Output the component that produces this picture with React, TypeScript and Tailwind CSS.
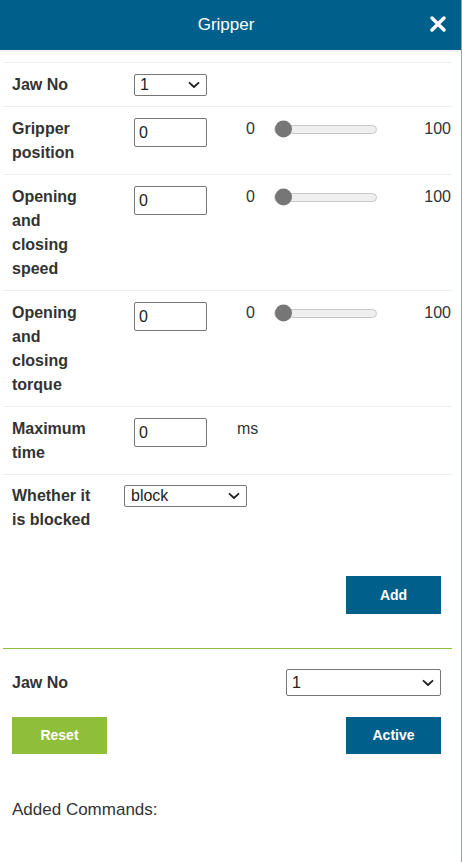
import React from "react";

const font = { fontFamily: '"Liberation Sans", Arial, sans-serif' };

function Chevron() {
  return (
    <svg width="12" height="8" viewBox="0 0 12 8" className="absolute right-[6px] top-1/2 -translate-y-1/2">
      <path d="M1.5 1.8 L6 6 L10.5 1.8" fill="none" stroke="#222" strokeWidth="1.8" strokeLinecap="round" strokeLinejoin="round" />
    </svg>
  );
}

function Select({ value, cls }: { value: string; cls: string }) {
  return (
    <div className={`relative border border-[#767676] rounded-[2px] bg-white text-[16px] text-[#222] leading-none flex items-center pl-[5px] shrink-0 ${cls}`}>
      {value}
      <Chevron />
    </div>
  );
}

function NumInput() {
  return (
    <div className="w-[73px] h-[29px] mt-[1px] border border-[#767676] rounded-[2px] bg-white text-[16px] text-[#222] flex items-center pl-[4px] shrink-0">
      0
    </div>
  );
}

function Slider() {
  return (
    <div className="flex items-center h-[24px] flex-1">
      <span className="text-[16px] text-[#333] w-[28px]">0</span>
      <div className="relative w-[103px] h-[9px] rounded-full bg-[#efefef] border border-[#c8c8c8]">
        <div className="absolute left-0 top-1/2 -translate-y-1/2 w-[17px] h-[17px] rounded-full bg-[#767676]" />
      </div>
      <div className="flex-1" />
      <span className="text-[16px] text-[#333]">100</span>
    </div>
  );
}

function Row({ label, children }: { label: React.ReactNode; children: React.ReactNode }) {
  return (
    <div className="flex items-start border-t border-[#eeeeee] pl-[9px] pr-[1px] pt-[10px] pb-[9px]">
      <div className="w-[122px] shrink-0 pr-[30px] text-[16px] font-bold text-[#333] leading-[24px]">{label}</div>
      {children}
    </div>
  );
}

export default function App() {
  return (
    <div className="flex w-[462px] min-h-[862px] bg-white" style={font}>
      <div className="w-[461px] flex flex-col">
        <div className="h-[50px] bg-[#005f8b] relative flex items-center justify-center shrink-0 pr-[9px]">
          <span className="text-white text-[17px]">Gripper</span>
          <svg width="16" height="16" viewBox="0 0 16 16" className="absolute left-[430px] top-[16px]">
            <path d="M2 2 L14 14 M14 2 L2 14" stroke="white" strokeWidth="3.4" strokeLinecap="round" />
          </svg>
        </div>
        <div className="h-[2px] bg-[#f2f2f2]" />
        <div className="ml-[3px] mr-[9px] mt-[10px]">
          <Row label="Jaw No">
            <Select value="1" cls="w-[73px] h-[22px] mt-[1px]" />
          </Row>
          <Row label="Gripper position">
            <NumInput />
            <div className="ml-[39px] flex-1 flex">
              <Slider />
            </div>
          </Row>
          <Row label={<>Opening<br />and<br />closing<br />speed</>}>
            <NumInput />
            <div className="ml-[39px] flex-1 flex">
              <Slider />
            </div>
          </Row>
          <Row label={<>Opening<br />and<br />closing<br />torque</>}>
            <NumInput />
            <div className="ml-[39px] flex-1 flex">
              <Slider />
            </div>
          </Row>
          <Row label={<>Maximum<br />time</>}>
            <NumInput />
            <span className="ml-[30px] text-[16px] text-[#333] leading-[24px]">ms</span>
          </Row>
          <div className="flex items-start border-t border-[#eeeeee] pl-[9px] pt-[9px] pb-[10px]">
            <div className="w-[112px] shrink-0 text-[16px] font-bold text-[#333] leading-[24px]">Whether it<br />is blocked</div>
            <Select value="block" cls="w-[123px] h-[22px] mt-[1px] pl-[6px]" />
          </div>
          <div className="flex justify-end mt-[34px] mr-[11px]">
            <button className="w-[95px] h-[38px] bg-[#005f8b] text-white text-[14px] font-bold">Add</button>
          </div>
          <div className="h-[1px] bg-[#8fbe3a] mt-[34px]" />
          <div className="flex items-center justify-between pl-[9px] mr-[11px] mt-[20px]">
            <span className="text-[16px] font-bold text-[#333]">Jaw No</span>
            <Select value="1" cls="w-[155px] h-[27px] pl-[5px]" />
          </div>
          <div className="flex items-center justify-between pl-[9px] mr-[11px] mt-[21px]">
            <button className="w-[95px] h-[37px] bg-[#8fbe3a] text-white text-[14px] font-bold">Reset</button>
            <button className="w-[95px] h-[37px] bg-[#005f8b] text-white text-[14px] font-bold">Active</button>
          </div>
          <div className="pl-[9px] mt-[43px] text-[17px] text-[#333]">Added Commands:</div>
        </div>
      </div>
      <div className="w-[1px] bg-[#9aa3ad]" />
    </div>
  );
}
